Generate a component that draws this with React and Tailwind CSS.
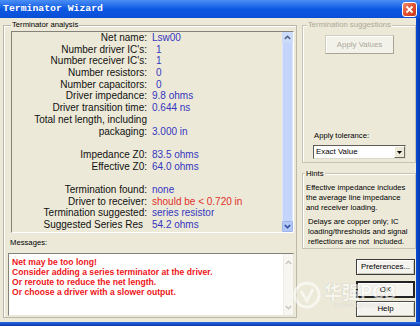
import React from 'react';

const rows = [
  ['Net name:', 'Lsw00', 0],
  ["Number driver IC's:", '1', 1],
  ["Number receiver IC's:", '1', 1],
  ['Number resistors:', '0', 1],
  ['Number capacitors:', '0', 1],
  ['Driver impedance:', '9.8 ohms', 0],
  ['Driver transition time:', '0.644 ns', 0],
  ['Total net length, including', '', 0],
  ['packaging:', '3.000 in', 0],
  ['', '', 0],
  ['Impedance Z0:', '83.5 ohms', 0],
  ['Effective Z0:', '64.0 ohms', 0],
  ['', '', 0],
  ['Termination found:', 'none', 0],
  ['Driver to receiver:', 'should be < 0.720 in', 2],
  ['Termination suggested:', 'series resistor', 0],
  ['Suggested Series Res', '54.2 ohms', 3],
];

function Chevron({ up, color }) {
  return (
    <svg width="7" height="5" viewBox="0 0 7 5">
      <path
        d={up ? 'M0.8 4 L3.5 1.3 L6.2 4' : 'M0.8 1 L3.5 3.7 L6.2 1'}
        fill="none"
        stroke={color}
        strokeWidth="1.6"
      />
    </svg>
  );
}

function CloseBtn() {
  return (
    <div className="w-[15px] h-[15px] rounded-[3px] border border-white bg-linear-to-br from-[#f08a6c] via-[#e0502e] to-[#c53a18] flex items-center justify-center">
      <svg width="9" height="9" viewBox="0 0 9 9">
        <path d="M1.5 1.5 L7.5 7.5 M7.5 1.5 L1.5 7.5" stroke="#fff" strokeWidth="1.8" />
      </svg>
    </div>
  );
}

export default function App() {
  return (
    <div className="w-[420px] h-[326px] relative overflow-hidden bg-[#ece9d8] flex flex-col font-['Liberation_Sans',Arial,sans-serif]">
      {/* Title bar */}
      <div className="h-[18px] shrink-0 flex items-center justify-between pl-[3px] pr-[3px] bg-linear-to-b from-[#4a8ef5] via-[#0c58e2] to-[#0a4ed6]">
        <span className="font-['Liberation_Mono',monospace] font-bold text-[9.8px] leading-none text-white">
          Terminator Wizard
        </span>
        <CloseBtn />
      </div>

      <div className="flex-1 flex min-h-0">
        <div className="flex-1 flex pl-[3px] pt-[7px] gap-[5px]">
          {/* Left group */}
          <div className="relative w-[294px] h-[293px] border border-[#bcb9ab] shadow-[inset_1px_1px_0_#fff] flex flex-col">
            <span className="absolute left-[7px] -top-[6px] px-[1px] bg-[#ece9d8] text-[7.7px] leading-[10px] text-black">
              Terminator analysis
            </span>
            {/* analysis panel */}
            <div className="ml-[7px] mt-[5px] w-[283px] h-[202px] border-t border-l border-t-[#85827a] border-l-[#85827a] border-b border-r border-b-white border-r-white flex">
              <div className="flex-1 grid grid-cols-[135px_1fr] gap-x-[5px] content-start text-[10px] leading-[11.7px]">
                {rows.map(([l, v, k], i) => (
                  <React.Fragment key={i}>
                    <div className={'text-right text-[#111] whitespace-nowrap h-[11.7px] ' + (k === 3 ? 'pr-[4px]' : '')}>{l}</div>
                    <div
                      className={
                        'whitespace-nowrap h-[11.7px] ' +
                        (k === 2 ? 'text-[#e0302a] ' : 'text-[#3535c0] ') +
                        (k === 1 ? 'pl-[4px]' : '')
                      }
                    >
                      {v}
                    </div>
                  </React.Fragment>
                ))}
              </div>
              {/* scrollbar */}
              <div className="w-[11px] flex flex-col">
                <div className="h-[11px] bg-[#cddbfa] flex items-center justify-center">
                  <Chevron up color="#4a5f88" />
                </div>
                <div className="flex-1 bg-[#c4d4fa] border-x border-[#dbe5fc]" />
                <div className="h-[11px] bg-[#b3c8f6] border border-[#9db5ea] rounded-[1px] flex items-center justify-center">
                  <Chevron color="#2b4a9c" />
                </div>
              </div>
            </div>
            <div className="ml-[6px] mt-[5px] text-[7.7px] leading-[10px] text-black">Messages:</div>
            <div className="ml-[4px] mt-[5px] w-[286px] h-[63px] bg-white border-t border-l border-t-[#85827a] border-l-[#85827a] border-b border-r border-b-[#e8e6da] border-r-[#e8e6da] flex">
              <div className="flex-1 pl-[3px] pt-[3px] font-bold text-[8.6px] leading-[10px] text-[#ee1520] whitespace-nowrap">
                <div>Net may be too long!</div>
                <div>Consider adding a series terminator at the driver.</div>
                <div>Or reroute to reduce the net length.</div>
                <div>Or choose a driver with a slower output.</div>
              </div>
              <div className="w-[10px] flex flex-col bg-[#f7f6f1] border-l border-[#eeede6]">
                <div className="h-[11px] mt-[3px] flex items-center justify-center">
                  <Chevron up color="#c9c7bd" />
                </div>
                <div className="flex-1" />
                <div className="h-[11px] mb-[2px] flex items-center justify-center">
                  <Chevron color="#c9c7bd" />
                </div>
              </div>
            </div>
          </div>

          {/* Right column */}
          <div className="w-[114px] flex flex-col">
            <div className="relative h-[138px] border border-[#c6c3b5] shadow-[inset_1px_1px_0_#fff] flex flex-col">
              <span className="absolute left-[4px] -top-[6px] px-[1px] bg-[#ece9d8] text-[7.7px] leading-[10px] text-[#aca899]">
                Termination suggestions
              </span>
              <div className="ml-[22px] mt-[9px] w-[69px] h-[19px] bg-[#f3f2ea] border border-[#cfcdc0] border-r-[#a8a596] border-b-[#a8a596] shadow-[inset_1px_1px_0_#fff] flex items-center justify-center text-[7.9px] text-[#aca899]">
                Apply Values
              </div>
              <div className="ml-[11px] mt-[77px] text-[7.7px] leading-[10px] text-black">Apply tolerance:</div>
              <div className="ml-[10px] mt-[4px] w-[93px] h-[14px] bg-white border-t border-l border-t-[#5f5d55] border-l-[#5f5d55] border-b border-r border-b-[#dcdacd] border-r-[#dcdacd] flex items-center">
                <span className="flex-1 pl-[2px] text-[7.9px] leading-none text-black">Exact Value</span>
                <div className="w-[11px] h-[12px] bg-[#ece9d8] border border-t-white border-l-white border-b-[#6d6b62] border-r-[#6d6b62] flex items-center justify-center">
                  <svg width="5" height="3" viewBox="0 0 5 3">
                    <path d="M0 0 H5 L2.5 3 Z" fill="#000" />
                  </svg>
                </div>
              </div>
            </div>

            <div className="relative mt-[10px] h-[76px] border border-[#c6c3b5] shadow-[inset_1px_1px_0_#fff] pl-[3px] pt-[9px] text-[7.7px] leading-[10px] text-black">
              <span className="absolute left-[2px] -top-[5px] px-[1px] bg-[#ece9d8] text-[7.7px] leading-[10px] text-black">
                Hints
              </span>
              <div>Effective impedance includes</div>
              <div>the average line impedance</div>
              <div>and receiver loading.</div>
              <div className="mt-[4px] pl-[2px]">Delays are copper only; IC</div>
              <div className="pl-[2px]">loading/thresholds and signal</div>
              <div className="pl-[2px]">reflections are not&nbsp; included.</div>
            </div>

            <div className="ml-[54px] mt-[10px] w-[59px] h-[16px] bg-[#f4f3ee] border border-[#3b3b3b] shadow-[inset_1px_1px_0_#fff,inset_-1px_-1px_0_#c9c6b8] flex items-center justify-center text-[7.9px] text-black">
              Preferences...
            </div>
            <div className="ml-[54px] mt-[6px] w-[59px] h-[17px] bg-[#f4f3ee] border-2 border-[#222] shadow-[inset_1px_1px_0_#fff] flex items-center justify-center text-[7.9px] text-black">
              OK
            </div>
            <div className="ml-[54px] mt-[3px] w-[59px] h-[16px] bg-[#f4f3ee] border border-[#4a4a4a] shadow-[inset_1px_1px_0_#fff,inset_-1px_-1px_0_#c9c6b8] flex items-center justify-center text-[7.9px] text-black">
              Help
            </div>
          </div>
        </div>
        <div className="w-[4px] bg-linear-to-r from-[#0a4ed6] to-[#0638a8]" />
      </div>
      <div className="h-[4px] shrink-0 bg-linear-to-b from-[#2a6ae8] to-[#0638a8]" />

      {/* watermark overlay */}
      <div className="absolute left-[292px] top-[280px] flex items-center gap-[2px] opacity-60 pointer-events-none">
        <svg width="30" height="30" viewBox="0 0 30 30">
          <circle cx="15" cy="15" r="12" fill="none" stroke="#fff" strokeWidth="3" />
          <path d="M9 11 L15 21 L21 9" fill="none" stroke="#fff" strokeWidth="3" />
        </svg>
        <div className="flex flex-col items-center">
          <span className="font-['Noto_Sans_CJK_SC',sans-serif] font-bold text-[18px] leading-[20px] text-white [text-shadow:0_0_1px_rgba(0,0,0,0.35)]">
            华强PCB
          </span>
          <span className="text-[7px] leading-[8px] text-white [text-shadow:0_0_1px_rgba(0,0,0,0.35)]">www.hqpcb.com</span>
        </div>
      </div>
    </div>
  );
}
